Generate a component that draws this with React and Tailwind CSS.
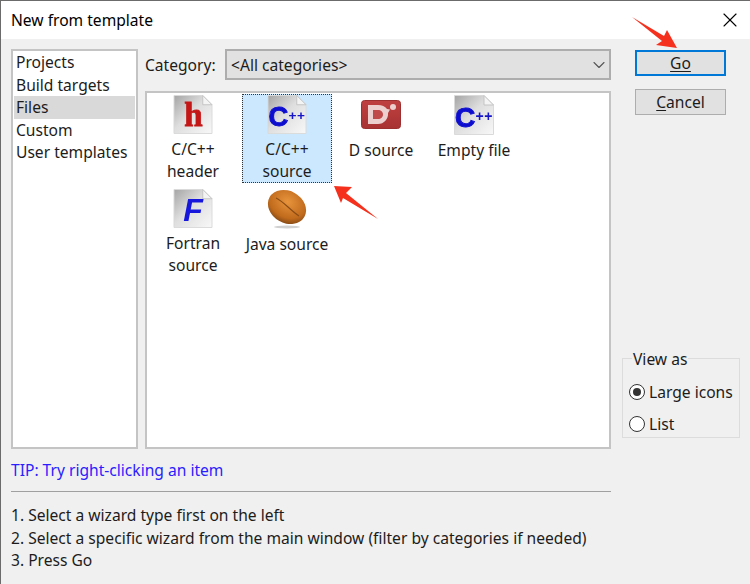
import React from "react";
import { X, ChevronDown } from "lucide-react";

const categories = ["Projects", "Build targets", "Files", "Custom", "User templates"];

function DocIcon({ id, children }) {
  return (
    <svg width="40" height="40" viewBox="0 0 40 40" className="block">
      <defs>
        <linearGradient id={id} x1="0" y1="0" x2="1" y2="1">
          <stop offset="0" stopColor="#a4a4a4" />
          <stop offset="0.45" stopColor="#dedede" />
          <stop offset="1" stopColor="#f8f8f8" />
        </linearGradient>
        <filter id={`${id}-soft`} x="-10%" y="-10%" width="120%" height="120%">
          <feGaussianBlur stdDeviation="0.45" />
        </filter>
      </defs>
      <path d="M0.5 0.5H30L39.5 10V39.5H0.5Z" fill={`url(#${id})`} stroke="#dadada" />
      <path d="M30 0.5V10H39.5Z" fill="#f4f4f4" stroke="#c4c4c4" />
      <g filter={`url(#${id}-soft)`}>{children}</g>
    </svg>
  );
}

function CppGlyph() {
  return (
    <>
      <text x="1" y="32" fontFamily="Liberation Sans" fontWeight="700" fontSize="28" fill="#0f0fd0" stroke="#0f0fd0" strokeWidth="1">C</text>
      <text x="21.5" y="26" fontFamily="Liberation Sans" fontWeight="700" fontSize="14" fill="#1414c8" letterSpacing="0.6">++</text>
    </>
  );
}

function DIcon() {
  return (
    <svg width="40" height="29" viewBox="0 0 40 29" className="block">
      <defs>
        <linearGradient id="d-red" x1="0" y1="0" x2="0" y2="1">
          <stop offset="0" stopColor="#c04040" />
          <stop offset="1" stopColor="#a83232" />
        </linearGradient>
      </defs>
      <rect x="0.5" y="0.5" width="39" height="28" rx="3" fill="url(#d-red)" stroke="#9c3030" />
      <path d="M7 5H17C21 5 24 6.500 26 9L29 9.500L27 13C27.500 19 23 24 17 24H7Z" fill="#ecd0d0" />
      <path d="M12 10H17C20 10 22 12 22 14.500C22 17 20 19 17 19H12Z" fill="#c04a4a" />
      <circle cx="32" cy="7" r="3" fill="#ecd0d0" />
    </svg>
  );
}

function BeanIcon() {
  return (
    <svg width="42" height="40" viewBox="0 0 42 40" className="block">
      <defs>
        <radialGradient id="bean" cx="0.45" cy="0.35" r="0.75">
          <stop offset="0" stopColor="#e8943c" />
          <stop offset="0.65" stopColor="#c06a1c" />
          <stop offset="1" stopColor="#6b3c12" />
        </radialGradient>
      </defs>
      <ellipse cx="21" cy="38" rx="13" ry="1.500" fill="#d0d0d0" />
      <ellipse cx="21" cy="18" rx="20" ry="16" transform="rotate(30 21 18)" fill="url(#bean)" />
      <path d="M10 9C17 12 24 21 33 27" fill="none" stroke="#8a4c16" strokeWidth="1.2" />
    </svg>
  );
}

const items = [
  {
    label: ["C/C++", "header"],
    icon: (
      <DocIcon id="doc-h">
        <text x="11" y="32" fontFamily="Liberation Serif" fontWeight="700" fontSize="34" fill="#c41616" stroke="#c41616" strokeWidth="0.8">h</text>
      </DocIcon>
    ),
  },
  {
    label: ["C/C++", "source"],
    selected: true,
    icon: (
      <DocIcon id="doc-c">
        <CppGlyph />
      </DocIcon>
    ),
  },
  { label: ["D source"], icon: <div className="h-10 pt-[5px]"><DIcon /></div> },
  {
    label: ["Empty file"],
    icon: (
      <DocIcon id="doc-e">
        <CppGlyph />
      </DocIcon>
    ),
  },
  {
    label: ["Fortran", "source"],
    icon: (
      <DocIcon id="doc-f">
        <text x="10" y="33" fontFamily="Liberation Sans" fontWeight="700" fontStyle="italic" fontSize="33" fill="#1414dc">F</text>
      </DocIcon>
    ),
  },
  { label: ["Java source"], icon: <BeanIcon /> },
];

function Radio({ checked, children }) {
  return (
    <div className="flex items-center gap-[4px] h-[22px]">
      <span className="w-4 h-4 rounded-full border border-[#333] bg-white flex items-center justify-center">
        {checked && <span className="w-2 h-2 rounded-full bg-[#333]" />}
      </span>
      <span>{children}</span>
    </div>
  );
}

export default function App() {
  return (
    <div
      className="relative w-[750px] h-[584px] overflow-hidden flex flex-col border-t border-l border-[#6b6b6b] bg-[#f0f0f0] text-[15.6px] leading-[22px] text-[#1c1c1c]"
      style={{ fontFamily: '"Noto Sans", sans-serif' }}
    >
      {/* Title bar */}
      <div className="h-[38px] shrink-0 bg-white flex items-center justify-between pl-[10px] pr-[8px] pb-[1px]">
        <span className="text-black">New from template</span>
        <X size={24} strokeWidth={1.1} className="text-black" />
      </div>

      <div className="flex-1 flex pl-[10px] pt-[10px]">
        {/* Left and centre */}
        <div className="w-[600px] flex flex-col">
          <div className="flex gap-[7px] h-[400px]">
            <ul className="w-[127px] border-2 border-[#c4c4c4] bg-white px-[1px]">
              {categories.map((c) => (
                <li key={c} className={`h-[22.5px] pl-[2px] ${c === "Files" ? "bg-[#d9d9d9]" : ""}`}>
                  {c}
                </li>
              ))}
            </ul>

            <div className="flex-1 flex flex-col">
              <div className="flex items-center h-[31px]">
                <span className="w-[80px]">Category:</span>
                <div className="flex-1 h-full border-2 border-[#adadad] bg-[#e1e1e1] flex items-center justify-between pl-[4px]">
                  <span>&lt;All categories&gt;</span>
                  <ChevronDown size={20} strokeWidth={1.3} className="text-[#555]" />
                </div>
              </div>
              <div className="mt-[11px] flex-1 border-2 border-[#c4c4c4] bg-white pt-[1px]">
                <div className="-ml-px grid grid-cols-[94px_94px_94px_92px] auto-rows-[94px]">
                  {items.map((item) => (
                    <div key={item.label.join(" ")} className="flex justify-center">
                      <div
                        className={`w-[90px] h-[89px] flex flex-col items-center ${
                          item.selected ? "bg-[#cce8ff] border border-dotted border-[#333]" : "border border-transparent"
                        }`}
                      >
                        {item.icon}
                        <div className="mt-[4px] text-center whitespace-nowrap">
                          {item.label.map((line) => (
                            <div key={line}>{line}</div>
                          ))}
                        </div>
                      </div>
                    </div>
                  ))}
                </div>
              </div>
            </div>
          </div>

          <div className="mt-[10px] h-[22px] text-[#2a20ff]">TIP: Try right-clicking an item</div>
          <div className="mt-[10px] h-[1px] bg-[#a0a0a0]" />
          <div className="mt-[12px] leading-[22.5px] whitespace-nowrap">
            <div>1. Select a wizard type first on the left</div>
            <div>2. Select a specific wizard from the main window (filter by categories if needed)</div>
            <div>3. Press Go</div>
          </div>
        </div>

        {/* Right column */}
        <div className="ml-[11px] w-[118px] flex flex-col">
          <div className="ml-[13px] mr-[14px] mt-[1px] h-[26px] border-2 border-[#0078d7] bg-[#e1e1e1] flex items-center justify-center">
            <span className="underline underline-offset-2">Go</span>
          </div>
          <div className="ml-[13px] mr-[14px] mt-[13px] h-[26px] border border-[#adadad] bg-[#e1e1e1] flex items-center justify-center">
            <span><span className="underline underline-offset-2">C</span>ancel</span>
          </div>
          <fieldset className="mt-[232px] h-[91px] border border-[#dcdcdc] pl-[6px] pt-[12px]">
            <legend className="ml-[3px] px-[1px] pt-[2px] leading-[20px]">View as</legend>
            <div className="flex flex-col gap-[10px]">
              <Radio checked>Large icons</Radio>
              <Radio>List</Radio>
            </div>
          </fieldset>
        </div>
      </div>

      {/* Annotation arrows */}
      <svg className="absolute left-[-1px] top-[-1px] pointer-events-none" width="750" height="584" viewBox="0 0 750 584">
        <polygon points="632,17 664,36 667,30 677,48 656,45 662,41" fill="#f5301c" />
        <polygon points="334,186 352,187 346,193 378,219 343,198 341,203" fill="#f5301c" />
      </svg>
    </div>
  );
}
